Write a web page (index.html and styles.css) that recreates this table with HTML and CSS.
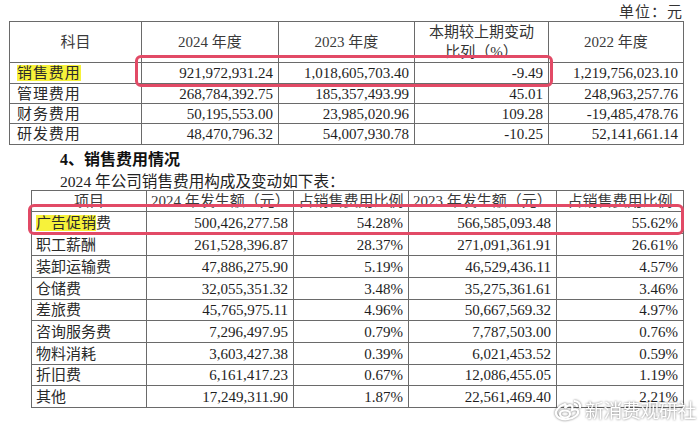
FILE: index.html
```html
<!DOCTYPE html>
<html lang="zh">
<head>
<meta charset="utf-8">
<link rel="stylesheet" href="styles.css">
</head>
<body>
<div class="page">
  <div class="unit">单位：元</div>
  <table class="t1">
    <colgroup><col style="width:132px"><col style="width:137px"><col style="width:136px"><col style="width:134px"><col style="width:135px"></colgroup>
    <tr class="hd">
      <td class="c">科目</td>
      <td class="c">2024 年度</td>
      <td class="c">2023 年度</td>
      <td class="c two">本期较上期变动<br>比列（%）</td>
      <td class="c">2022 年度</td>
    </tr>
    <tr class="r21"><td class="name"><span class="hl">销售费用</span></td><td class="n">921,972,931.24</td><td class="n">1,018,605,703.40</td><td class="n">-9.49</td><td class="n">1,219,756,023.10</td></tr>
    <tr class="r20"><td class="name">管理费用</td><td class="n">268,784,392.75</td><td class="n">185,357,493.99</td><td class="n">45.01</td><td class="n">248,963,257.76</td></tr>
    <tr class="r20"><td class="name">财务费用</td><td class="n">50,195,553.00</td><td class="n">23,985,020.96</td><td class="n">109.28</td><td class="n">-19,485,478.76</td></tr>
    <tr class="r21"><td class="name">研发费用</td><td class="n">48,470,796.32</td><td class="n">54,007,930.78</td><td class="n">-10.25</td><td class="n">52,141,661.14</td></tr>
  </table>
  <div class="sec">
    <div class="h4">4、销售费用情况</div>
    <div class="intro">2024 年公司销售费用构成及变动如下表：</div>
  </div>
  <table class="t2">
    <colgroup><col style="width:115px"><col style="width:147px"><col style="width:115px"><col style="width:148px"><col style="width:127px"></colgroup>
    <tr class="r21">
      <td class="c">项目</td>
      <td class="c">2024 年发生额（元）</td>
      <td class="c">占销售费用比例</td>
      <td class="c">2023 年发生额（元）</td>
      <td class="c">占销售费用比例</td>
    </tr>
    <tr class="r22"><td class="name"><span class="hl">广告促销</span>费</td><td class="n">500,426,277.58</td><td class="n">54.28%</td><td class="n">566,585,093.48</td><td class="n">55.62%</td></tr>
    <tr class="r22"><td class="name">职工薪酬</td><td class="n">261,528,396.87</td><td class="n">28.37%</td><td class="n">271,091,361.91</td><td class="n">26.61%</td></tr>
    <tr class="r22"><td class="name">装卸运输费</td><td class="n">47,886,275.90</td><td class="n">5.19%</td><td class="n">46,529,436.11</td><td class="n">4.57%</td></tr>
    <tr class="r22"><td class="name">仓储费</td><td class="n">32,055,351.32</td><td class="n">3.48%</td><td class="n">35,275,361.61</td><td class="n">3.46%</td></tr>
    <tr class="r21"><td class="name">差旅费</td><td class="n">45,765,975.11</td><td class="n">4.96%</td><td class="n">50,667,569.32</td><td class="n">4.97%</td></tr>
    <tr class="r22"><td class="name">咨询服务费</td><td class="n">7,296,497.95</td><td class="n">0.79%</td><td class="n">7,787,503.00</td><td class="n">0.76%</td></tr>
    <tr class="r22"><td class="name">物料消耗</td><td class="n">3,603,427.38</td><td class="n">0.39%</td><td class="n">6,021,453.52</td><td class="n">0.59%</td></tr>
    <tr class="r21"><td class="name">折旧费</td><td class="n">6,161,417.23</td><td class="n">0.67%</td><td class="n">12,086,455.05</td><td class="n">1.19%</td></tr>
    <tr class="r22"><td class="name">其他</td><td class="n">17,249,311.90</td><td class="n">1.87%</td><td class="n">22,561,469.40</td><td class="n">2.21%</td></tr>
  </table>
  <div class="box box1"></div>
  <div class="box box2"></div>
  <div class="wm">
    <svg class="wb" width="30" height="22" viewBox="0 0 30 22">
      <g fill="none" stroke="#fff" stroke-width="2.2">
        <path d="M12 5 C6 7 2 12 3 15 C4 19 10 21 15 20 C22 19 26 15 25 12 C24 10 21 10 19 11 C20 8 19 6 17 6 C16 6 14 7 12 9 C13 6 13 5 12 5 Z"/>
        <ellipse cx="12" cy="15" rx="5" ry="3.5"/>
        <path d="M21 2 C25 2 28 5 27 9"/>
        <path d="M21 5 C23 5 24 6 24 8"/>
      </g>
    </svg>
    <span>新消费观研社</span>
  </div>
</div>
</body>
</html>
```
FILE: styles.css
```css
html, body {
  margin: 0;
  padding: 0;
  background: #fff;
}
.page {
  position: relative;
  width: 700px;
  height: 428px;
  overflow: hidden;
  font-family: "Liberation Serif", "Noto Sans CJK SC", serif;
  color: #1e1e1e;
}
.unit {
  height: 21px;
  line-height: 24px;
  text-align: right;
  padding-right: 17px;
  font-size: 15px;
  letter-spacing: 1px;
  color: #333;
}
table {
  border-collapse: collapse;
  table-layout: fixed;
  font-size: 15px;
}
td {
  border: 1px solid #6a6a6a;
  padding: 0 4px;
  white-space: nowrap;
  overflow: hidden;
  line-height: 14px;
  vertical-align: middle;
}
.t1 {
  margin-left: 9px;
  width: 674px;
}
.hd { height: 41px; }
.r20 { height: 20px; }
.r21 { height: 21px; }
.r22 { height: 22px; }
.t1 .name { letter-spacing: 0.9px; padding-left: 7px; }
.t1 td.two { line-height: 19.5px; padding-top: 1px; vertical-align: top; color: #333; }
.c { text-align: center; color: #3a3a3a; }
.n { text-align: right; padding-right: 5px; }
.name { text-align: left; padding-left: 4px; color: #2a2a2a; }
.hl { background: #f7f23a; }
.sec {
  padding-left: 60px;
  padding-top: 6px;
}
.h4 {
  font-size: 16px;
  font-weight: bold;
  line-height: 18px;
  color: #111;
}
.intro {
  margin-top: 4px;
  font-size: 15.6px;
  line-height: 17px;
  color: #222;
}
.t2 {
  margin-left: 31px;
  width: 652px;
}
.box {
  position: absolute;
  border: 3.5px solid #e24a66;
  border-radius: 6px;
  box-sizing: border-box;
}
.box1 { left: 135px; top: 55px; width: 418px; height: 32px; }
.box2 { left: 28px; top: 204px; width: 656px; height: 31px; }
.wm {
  position: absolute;
  left: 553px;
  top: 399px;
  display: flex;
  align-items: center;
  gap: 2px;
  filter: drop-shadow(0 0 1px rgba(0,0,0,0.55));
}
.wm span {
  font-family: "Noto Sans CJK SC", sans-serif;
  font-size: 19px;
  line-height: 22px;
  color: #fff;
  letter-spacing: -0.5px;
}
```
